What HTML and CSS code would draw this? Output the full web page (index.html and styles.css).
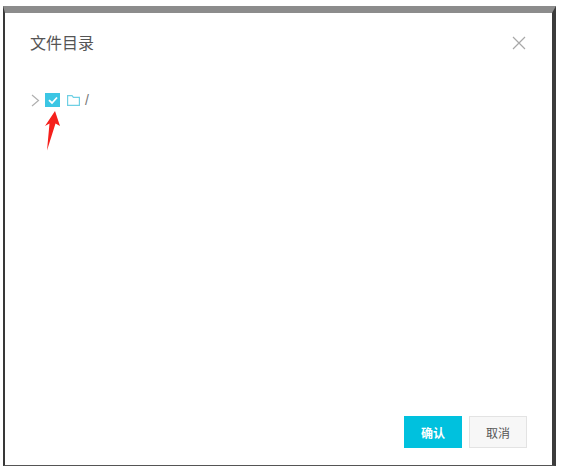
FILE: index.html
```html
<!DOCTYPE html>
<html lang="zh-CN">
<head>
  <meta charset="UTF-8">
  <title>文件目录</title>
  <link rel="stylesheet" href="styles.css">
</head>
<body>

  <div class="dialog">
    <!-- Header -->
    <div class="dialog-header">
      <h2 class="dialog-title">文件目录</h2>
      <svg class="close-icon" width="14" height="14" viewBox="0 0 14 14">
        <path d="M1 1L13 13M13 1L1 13" stroke="#a8a8a8" stroke-width="1.2" fill="none"/>
      </svg>
    </div>

    <!-- Tree -->
    <div class="dialog-body">
      <div class="tree-row">
        <svg class="tree-caret" width="9" height="13" viewBox="0 0 9 13">
          <path d="M1 1L7.5 6.5L1 12" stroke="#b0b0b0" stroke-width="1.2" fill="none"/>
        </svg>
        <span class="tree-check">
          <svg width="14" height="14" viewBox="0 0 14 14">
            <path d="M3 7.2L6 10L11 4.5" stroke="#fff" stroke-width="1.8" fill="none"/>
          </svg>
        </span>
        <svg class="tree-folder" width="13" height="11" viewBox="0 0 13 11">
          <path d="M.6 10.4V.6H5L6.4 2.400H12.4V10.4Z" stroke="#6fd0e4" stroke-width="1.2" fill="none"/>
        </svg>
        <span class="tree-name">/</span>
      </div>
      <svg class="red-arrow" width="16" height="40" viewBox="0 0 16 40">
        <path d="M10 0L15 15L10.500 12.500L2 39.500L4.500 12.500L0 15Z" fill="#f5201c"/>
      </svg>
    </div>

    <!-- Footer -->
    <div class="dialog-footer">
      <button class="btn btn-primary">确认</button>
      <button class="btn">取消</button>
    </div>
  </div>

</body>
</html>
```

FILE: styles.css
```css
html, body {
  margin: 0;
  padding: 0;
  background-color: #fff;
}
body {
  padding: 6px 0 0 3px;
  font-family: "Liberation Sans", "Noto Sans CJK SC", sans-serif;
  color: #333;
}
.dialog {
  position: relative;
  box-sizing: border-box;
  width: 553px;
  height: 460px;
  display: flex;
  flex-direction: column;
  background: #fff;
  border-top: 7px solid #8c8c8c;
  border-left: 2px solid #383838;
  border-right: 4px solid #3c3c3c;
  border-bottom: 1px solid #555;
}
.dialog-header {
  display: flex;
  justify-content: space-between;
  align-items: center;
  height: 60px;
  padding: 0 26px 0 25px;
}
.dialog-title {
  margin: 0 0 2px;
  font-size: 16px;
  font-weight: normal;
  color: #555;
}
.dialog-body {
  flex: 1;
  padding: 19px 0 0 26px;
}
.tree-row {
  display: flex;
  align-items: center;
  height: 16px;
}
.tree-caret {
  margin-right: 5px;
}
.tree-check {
  display: flex;
  width: 15px;
  height: 14px;
  align-items: center;
  justify-content: center;
  background-color: #3cc6e4;
  margin-right: 7px;
}
.tree-folder {
  margin-right: 5px;
}
.tree-name {
  font-size: 14px;
  color: #777;
}
.red-arrow {
  position: absolute;
  left: 40px;
  top: 98px;
}
.dialog-footer {
  display: flex;
  justify-content: flex-end;
  gap: 7px;
  padding: 0 25px 17px 0;
}
.btn {
  width: 58px;
  height: 32px;
  padding: 0;
  font-family: inherit;
  font-size: 12px;
  color: #555;
  background-color: #f7f7f7;
  border: 1px solid #e3e3e3;
}
.btn-primary {
  color: #fff;
  background-color: #00c1de;
  border-color: #00c1de;
  font-weight: bold;
}
```
